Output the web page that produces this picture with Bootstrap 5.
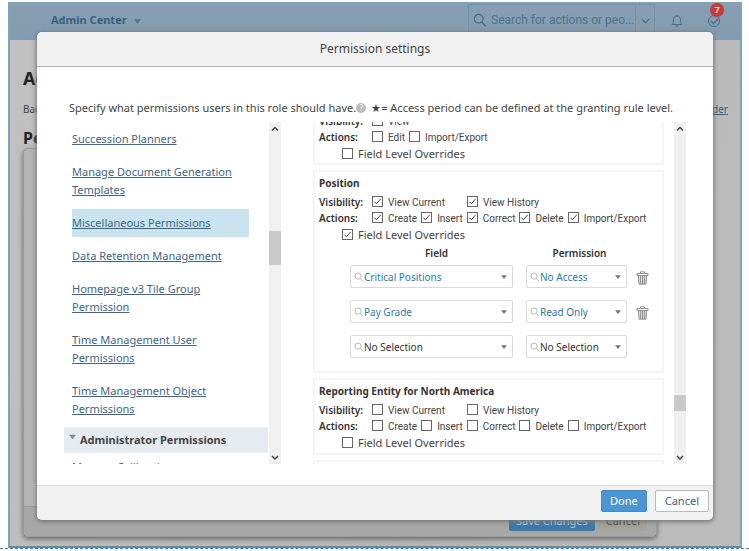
<!DOCTYPE html>
<html lang="en">
<head>
<meta charset="utf-8">
<meta name="viewport" content="width=device-width, initial-scale=1">
<title>Permission settings</title>
<link href="https://cdn.jsdelivr.net/npm/bootstrap@5.3.0/dist/css/bootstrap.min.css" rel="stylesheet">
<style>
body{font-family:"Noto Sans","Open Sans",sans-serif;font-size:11px;line-height:16px;color:#444;background:#fff;overflow:hidden}
button,select,input{font-family:inherit}
.shell{margin:2px 7px 0 8px;border:2px solid #7fa3b3;border-bottom-color:#5f8ba3;background:linear-gradient(100deg,#c0c0c0,#b6b6b6 60%,#bcbcbc)}
.topbar{height:36px;background:linear-gradient(#869fb4,#839bad);padding:0 19px 0 41px}
.brand-menu{font-size:11px;font-weight:700}
.tool.brand-menu{color:#37607f}
.brand-menu svg{margin-left:4px;color:#4f7390}
.find{height:30px;border:1px solid #7890a6;border-bottom:0;color:#45698a}
.find input{width:144px;border:0;background:none;color:#45698a;font-family:Roboto,"Noto Sans",sans-serif;font-size:12px;padding:0}
.find input::placeholder{color:#4e7190;opacity:1}
.find button{border:0;border-left:1px solid #7890a6;background:none;width:19px;padding:0;color:#45698a}
.tool{border:0;background:none;padding:0;color:#4c6f8e}
.count{top:-9px;left:3px;min-width:14px;height:14px;border-radius:7px;background:#c9393a;color:#eed;font-size:9px;line-height:14px;font-weight:600}
.page-title{font-size:18px;line-height:24px;font-weight:700;color:#222;margin:26px 0 0 13px}
.crumbs{font-size:10px;margin:11px 12px 0 13px;color:#444}
.crumbs a{color:#315f80}
.section-title{font-size:16px;line-height:20px;font-weight:700;color:#222;margin:11px 0 0 13px}
.panel{margin:0 83px 9px 13px;border:1px solid #999;border-radius:5px;background:#b4b4b4;box-shadow:0 2px 5px #666}
.panel-main{height:357px}
.panel-foot{border-top:1px solid #989898;background:#a7a7a7;padding:4px 9px 5px;border-radius:0 0 5px 5px}
.panel-foot button{border:0;border-radius:2px;height:20px;font-size:11px;line-height:16px;padding:0 7px;background:#3e78ab;color:#b9cbdb}
.panel-foot .plain{background:#a3a297;color:#4c4c4c}
.rule{border-top:1px dashed #2b78d0}
.dialog{position:absolute;top:32px;left:37px;right:36px;border:0;border-radius:5px;box-shadow:0 1px 4px 1px #777;overflow:hidden;color:#444}
.dialog .card-header{background:#f1f1f1;border-bottom:1px solid #b5b5b5;padding:8px;line-height:18px;font-size:12px}
.dialog h2{font-size:12px;line-height:18px;font-weight:400;margin:0}
.dialog .card-body{padding:33px 27px 21px}
.dialog .card-footer{background:#f1f1f1;border-top:1px solid #ddd;padding:4px 4px 8px}
.intro{padding-left:5px;margin-bottom:6px;line-height:16px;white-space:nowrap;font-size:11px;color:#444}
.help{width:10px;height:10px;border-radius:5px;background:#bbb;color:#fff;font-size:8px;line-height:10px;border:0;padding:0;margin-right:5px}
.act{height:22px;border:1px solid #b9b9b9;border-radius:2px;background:#fcfcfc;color:#46657f;font-size:11px;line-height:18px;padding:0 9px}
.act.go{background:#4c95d3;border-color:#428ac7;color:#fff;padding:0 8px}
.pane{height:342px;overflow:hidden}
.side{width:217px}
.detail{width:373px}
.links{padding:3px 20px 0 8px}
.links li{padding:5px 0;margin-bottom:5px;line-height:18px;font-size:11px}
.links li.picked{background:#c9e4f0}
.links a{color:#3f6484;display:inline-block}
.group{background:#e6ebf0;height:26px;font-size:11px;font-weight:700;color:#444;padding:0 5px;margin:-1px 1px 0 0}
.group svg{margin:-7px 4px 0 0;color:#888}
.sbar{width:12px;flex:none;background:#f0f0f0;color:#444}
.sbar span{background:#c9c9c9}
.sbar .up{height:14px}
.at-left{margin-top:95px;height:34px}
.at-right{margin-top:259px;height:16px}
.box{border:2px solid #f5f5f5;width:351px;padding:3px 4px 2px;margin-bottom:5px}
.box.cut{margin-top:-11px;padding-top:0;padding-bottom:1px}
.box h3{font-size:10px;line-height:16px;font-weight:700;color:#333;margin:0 0 3px}
.opts{height:16px;gap:4px;font-size:10px}
.opts b{width:49px;font-weight:600;color:#333}
.opts label{font-family:Roboto,"Noto Sans",sans-serif;padding-top:2px}
.opts label,.over label{gap:5px}
.opts .wide{width:91px}
.box input{appearance:none;width:11px;height:11px;border:1px solid #666;margin:0;background:#fff;flex:none}
.opts input{margin-bottom:4px}
.box input:checked{background:#fff url("data:image/svg+xml,%3Csvg xmlns='http://www.w3.org/2000/svg' viewBox='0 0 9 9'%3E%3Cpath d='M1.4 4.6l2 2.2 4.3-5' fill='none' stroke='%23444'/%3E%3C/svg%3E")}
.over{padding-left:23px;height:17px;font-size:11px}
.pairs{margin:0 0 0 31px;font-size:10px}
.pairs th{font-weight:600;line-height:20px;padding:0 3px 2px 0;text-align:center;color:#333}
.pairs td{padding:0 13px 12px 0}
.pairs td+td{padding-right:9px}
.pairs tr:last-child td{padding-bottom:11px}
.pick{border:1px solid #d9d9d9;border-radius:2px;height:23px;padding:0 5px 0 3px}
.pick select{appearance:none;border:0;background:none;color:#2b7ba3;font-size:10px;padding:0;min-width:0;flex:1}
.pick.none select{color:#333}
.field{width:163px}
.perm{width:101px}
.bin{border:0;background:none;padding:0;color:#888;line-height:0}
</style>
</head>
<body>
<svg class="d-none" aria-hidden="true">
  <symbol id="lens" viewBox="0 0 16 16"><circle cx="6.5" cy="6.5" r="5" fill="none" stroke="currentColor" stroke-width="1.3"/><path d="M10 10.5l4.5 4.5" stroke="currentColor" stroke-width="1.6"/></symbol>
  <symbol id="caret" viewBox="0 0 8 5"><path d="M0 0h8L4 5z" fill="currentColor"/></symbol>
  <symbol id="chev" viewBox="0 0 8 5"><path d="M.8 .8L4 4 7.200 .8" fill="none" stroke="currentColor" stroke-width="1"/></symbol>
  <symbol id="bin" viewBox="0 0 13 14"><path d="M2.500 4.500h8l-.7 8.700H3.200z" fill="#ddd"/><path d="M1 2.500h11v2H1zM4.500 2.200V.8h4v1.400M2.300 4.500l.7 8.700h7l.7-8.700M4.600 5v8M6.500 5v8M8.400 5v8" fill="none" stroke="currentColor" stroke-width=".9"/></symbol>
</svg>

<div class="shell">
  <header class="topbar d-flex align-items-start justify-content-between">
    <button class="tool brand-menu mt-2" type="button">Admin Center <svg width="7" height="5"><use href="#caret"/></svg></button>
    <div class="d-flex align-items-start">
      <div class="find d-flex align-items-center">
        <svg class="mx-1" width="14" height="14"><use href="#lens"/></svg>
        <input type="text" aria-label="Search" placeholder="Search for actions or peo...">
        <button class="h-100" type="button" aria-label="Search scope"><svg width="9" height="6"><use href="#chev"/></svg></button>
      </div>
      <button class="tool mt-2 ms-3" type="button" aria-label="Notifications"><svg width="12" height="14" viewBox="0 0 12 14"><path d="M1 10.500c1.500-1 1.300-3 1.500-5C2.700 3 4 2 6 2s3.300 1 3.500 3.500c.2 2 0 4 1.500 5zM4.500 10.800c0 2 3 2 3 0M6 2V.7" fill="none" stroke="currentColor"/></svg></button>
      <button class="tool position-relative mt-2 ms-4" type="button" aria-label="To do"><svg width="14" height="18" viewBox="0 0 14 18"><circle cx="7" cy="9" r="5.500" fill="none" stroke="currentColor"/><path d="M4 9l2.500 2.500L11 7" fill="none" stroke="currentColor" stroke-width="1.500"/></svg><span class="count position-absolute">7</span></button>
    </div>
  </header>
  <h1 class="page-title">Ad</h1>
  <div class="crumbs d-flex justify-content-between"><span>Back</span><a href="#">der</a></div>
  <h2 class="section-title">Per</h2>
  <div class="panel">
    <div class="panel-main"></div>
    <div class="panel-foot d-flex justify-content-end gap-1"><button type="button">Save Changes</button><button class="plain" type="button">Cancel</button></div>
  </div>
</div>
<div class="rule"></div>

<div class="dialog card" role="dialog" aria-labelledby="dlg">
  <div class="card-header text-center"><h2 id="dlg">Permission settings</h2></div>
  <div class="card-body">
    <p class="intro d-flex align-items-center"><span>Specify what permissions users in this role should have.</span><button class="help" type="button">?</button><span>★= Access period can be defined at the granting rule level.</span></p>
    <div class="d-flex justify-content-between">
      <div class="side pane d-flex">
        <div class="flex-grow-1">
          <ul class="links list-unstyled mb-0">
            <li><a href="#">Succession Planners</a></li>
            <li><a href="#">Manage Document Generation<br>Templates</a></li>
            <li class="picked"><a href="#">Miscellaneous Permissions</a></li>
            <li><a href="#">Data Retention Management</a></li>
            <li><a href="#">Homepage v3 Tile Group<br>Permission</a></li>
            <li><a href="#">Time Management User<br>Permissions</a></li>
            <li><a href="#">Time Management Object<br>Permissions</a></li>
          </ul>
          <div class="group d-flex align-items-center"><svg width="7" height="6"><use href="#caret"/></svg>Administrator Permissions</div>
          <ul class="links list-unstyled pt-0"><li><a href="#">Manage Calibration</a></li></ul>
        </div>
        <div class="sbar d-flex flex-column align-items-center"><svg class="up" width="8" viewBox="0 0 8 14"><path d="M1 8.500l3-3 3 3" fill="none" stroke="currentColor" stroke-width="1.500"/></svg><span class="at-left w-100"></span><svg class="up mt-auto" width="8" viewBox="0 0 8 14"><path d="M1 6l3 3 3-3" fill="none" stroke="currentColor" stroke-width="1.500"/></svg></div>
      </div>
      <div class="detail pane d-flex justify-content-between">
        <div>
          <section class="box cut">
            <div class="opts d-flex align-items-center"><b>Visibility:</b><label class="d-flex align-items-center"><input type="checkbox">View</label></div>
            <div class="opts d-flex align-items-center"><b>Actions:</b><label class="d-flex align-items-center"><input type="checkbox">Edit</label><label class="d-flex align-items-center"><input type="checkbox">Import/Export</label></div>
            <div class="over d-flex"><label class="d-flex align-items-center"><input type="checkbox">Field Level Overrides</label></div>
          </section>
          <section class="box">
            <h3>Position</h3>
            <div class="opts d-flex align-items-center"><b>Visibility:</b><label class="wide d-flex align-items-center"><input type="checkbox" checked>View Current</label><label class="d-flex align-items-center"><input type="checkbox" checked>View History</label></div>
            <div class="opts d-flex align-items-center"><b>Actions:</b><label class="d-flex align-items-center"><input type="checkbox" checked>Create</label><label class="d-flex align-items-center"><input type="checkbox" checked>Insert</label><label class="d-flex align-items-center"><input type="checkbox" checked>Correct</label><label class="d-flex align-items-center"><input type="checkbox" checked>Delete</label><label class="d-flex align-items-center"><input type="checkbox" checked>Import/Export</label></div>
            <div class="over d-flex"><label class="d-flex align-items-center"><input type="checkbox" checked>Field Level Overrides</label></div>
            <table class="pairs">
              <thead><tr><th>Field</th><th>Permission</th><th></th></tr></thead>
              <tbody>
                <tr><td><div class="pick field d-flex align-items-center"><svg width="10" height="10" color="#aaa"><use href="#lens"/></svg><select aria-label="Field 1"><option>Critical Positions</option></select><svg width="6" height="4" color="#777"><use href="#caret"/></svg></div></td><td><div class="pick perm d-flex align-items-center"><svg width="10" height="10" color="#aaa"><use href="#lens"/></svg><select aria-label="Permission 1"><option>No Access</option></select><svg width="6" height="4" color="#777"><use href="#caret"/></svg></div></td><td><button class="bin" type="button" aria-label="Delete row 1"><svg width="13" height="14"><use href="#bin"/></svg></button></td></tr>
                <tr><td><div class="pick field d-flex align-items-center"><svg width="10" height="10" color="#aaa"><use href="#lens"/></svg><select aria-label="Field 2"><option>Pay Grade</option></select><svg width="6" height="4" color="#777"><use href="#caret"/></svg></div></td><td><div class="pick perm d-flex align-items-center"><svg width="10" height="10" color="#aaa"><use href="#lens"/></svg><select aria-label="Permission 2"><option>Read Only</option></select><svg width="6" height="4" color="#777"><use href="#caret"/></svg></div></td><td><button class="bin" type="button" aria-label="Delete row 2"><svg width="13" height="14"><use href="#bin"/></svg></button></td></tr>
                <tr><td><div class="pick none field d-flex align-items-center"><svg width="10" height="10" color="#aaa"><use href="#lens"/></svg><select aria-label="Field 3"><option>No Selection</option></select><svg width="6" height="4" color="#777"><use href="#caret"/></svg></div></td><td><div class="pick none perm d-flex align-items-center"><svg width="10" height="10" color="#aaa"><use href="#lens"/></svg><select aria-label="Permission 3"><option>No Selection</option></select><svg width="6" height="4" color="#777"><use href="#caret"/></svg></div></td><td></td></tr>
              </tbody>
            </table>
          </section>
          <section class="box">
            <h3>Reporting Entity for North America</h3>
            <div class="opts d-flex align-items-center"><b>Visibility:</b><label class="wide d-flex align-items-center"><input type="checkbox">View Current</label><label class="d-flex align-items-center"><input type="checkbox">View History</label></div>
            <div class="opts d-flex align-items-center"><b>Actions:</b><label class="d-flex align-items-center"><input type="checkbox">Create</label><label class="d-flex align-items-center"><input type="checkbox">Insert</label><label class="d-flex align-items-center"><input type="checkbox">Correct</label><label class="d-flex align-items-center"><input type="checkbox">Delete</label><label class="d-flex align-items-center"><input type="checkbox">Import/Export</label></div>
            <div class="over d-flex"><label class="d-flex align-items-center"><input type="checkbox">Field Level Overrides</label></div>
          </section>
          <section class="box"></section>
        </div>
        <div class="sbar d-flex flex-column align-items-center"><svg class="up" width="8" viewBox="0 0 8 14"><path d="M1 8.500l3-3 3 3" fill="none" stroke="currentColor" stroke-width="1.500"/></svg><span class="at-right w-100"></span><svg class="up mt-auto" width="8" viewBox="0 0 8 14"><path d="M1 6l3 3 3-3" fill="none" stroke="currentColor" stroke-width="1.500"/></svg></div>
      </div>
    </div>
  </div>
  <div class="card-footer d-flex justify-content-end gap-2"><button class="act go" type="button">Done</button><button class="act" type="button">Cancel</button></div>
</div>
<script src="https://cdn.jsdelivr.net/npm/bootstrap@5.3.0/dist/js/bootstrap.bundle.min.js"></script>
</body>
</html>
